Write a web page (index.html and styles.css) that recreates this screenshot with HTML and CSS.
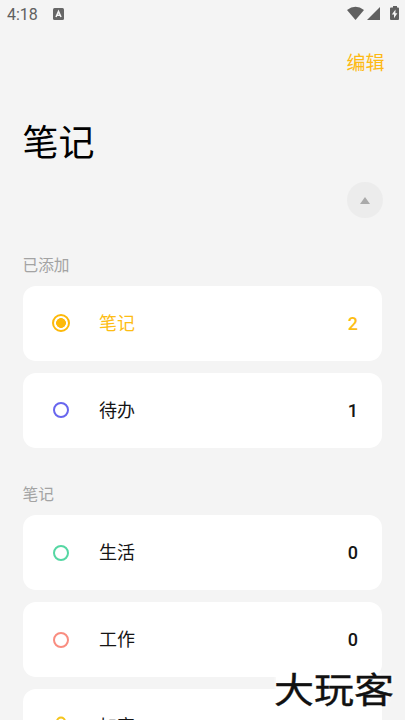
FILE: index.html
```html
<!DOCTYPE html>
<html lang="zh-CN">
<head>
<meta charset="utf-8">
<title>笔记</title>
<link rel="stylesheet" href="styles.css">
</head>
<body>
<header class="status">
  <span class="time">4:18</span>
  <svg class="badge" width="11" height="12" viewBox="0 0 11 12"><rect width="11" height="12" rx="1.5" fill="#666"/><path d="M3 9 5.500 3.500 8 9M4 7.300h3" fill="none" stroke="#f4f4f4" stroke-width="1.600"/></svg>
  <svg class="system" width="52" height="16" viewBox="0 0 52 16" fill="#606060"><path d="M0 4Q8.500-2.500 17 4L8.500 14Z"/><path d="M33 1V14H20Z"/><path d="M44 1.600h2V0h4v1.600h1q1 0 1 1V13q0 1-1 1h-7q-1 0-1-1V2.600q0-1 1-1z"/><path d="M48.500 3.500 44.800 8.500h2.200v3.700l3.400-5h-2z" fill="#f4f4f4"/></svg>
</header>
<nav class="toolbar"><span>编辑</span></nav>
<h1>笔记</h1>
<div class="collapse"><button aria-label="收起"><svg width="10" height="7" viewBox="0 0 10 7"><path d="M5 0 10 7H0Z" fill="#aaa"/></svg></button></div>
<main>
  <section>
    <h2>已添加</h2>
    <ul>
      <li class="active"><i class="dot selected"></i><span>笔记</span><b>2</b></li>
      <li><i class="dot blue"></i><span>待办</span><b>1</b></li>
    </ul>
  </section>
  <section>
    <h2>笔记</h2>
    <ul>
      <li><i class="dot green"></i><span>生活</span><b>0</b></li>
      <li><i class="dot coral"></i><span>工作</span><b>0</b></li>
      <li><svg class="lock" width="16" height="20" viewBox="0 0 16 20"><path d="M4 9V5.500a4 4 0 0 1 8 0V9" fill="none" stroke="#f5c51d" stroke-width="2"/><rect x="1" y="8" width="14" height="11" rx="2" fill="#f5c51d"/></svg><span>加密</span></li>
    </ul>
  </section>
</main>
<div class="watermark"><span>大玩客</span></div>
</body>
</html>
```
FILE: styles.css
```css
* { box-sizing: border-box; }
html { overflow: hidden; }
body {
  position: relative;
  margin: 0;
  height: 720px;
  overflow: hidden;
  background: #f4f4f4;
  color: #151515;
  font-family: Roboto, "Noto Sans CJK SC", sans-serif;
}
.status {
  display: flex;
  align-items: center;
  height: 28px;
  padding: 0 7px;
  color: #606060;
}
.time { width: 46px; font-size: 16px; }
.system { margin-left: auto; margin-right: -1px; }
.toolbar {
  display: flex;
  justify-content: flex-end;
  align-items: center;
  height: 66px;
  padding-right: 20.5px;
  color: #fdb913;
  font-size: 19px;
}
h1 {
  margin: 23px 0 0 22.5px;
  font-size: 36px;
  line-height: 54px;
  font-weight: 400;
  color: #000;
}
.collapse {
  display: flex;
  justify-content: flex-end;
  padding: 11px 22.5px 0 0;
}
.collapse button {
  display: grid;
  place-items: center;
  width: 36px;
  height: 36px;
  padding: 0;
  border: 0;
  border-radius: 50%;
  background: #ececec;
}
main { padding: 35px 23px 0 22.5px; }
section { margin-bottom: 34px; }
h2 {
  margin: 0 0 8px;
  font-size: 15.7px;
  line-height: 25px;
  font-weight: 400;
  color: #a3a3a3;
}
ul {
  display: grid;
  gap: 12px;
  margin: 0;
  padding: 0;
  list-style: none;
}
li {
  display: flex;
  align-items: center;
  height: 75px;
  padding: 0 24px 1px 30px;
  border-radius: 13px;
  background: #fff;
  font-size: 18px;
}
li span { margin-left: 30.5px; padding-bottom: 2px; }
li b { margin-left: auto; font-weight: 500; font-size: 18px; }
.active { color: #fdbd14; }
.dot {
  width: 16px;
  height: 16px;
  border: 2px solid;
  border-radius: 50%;
}
.selected {
  width: 18px;
  height: 18px;
  margin: 0 -1px;
  background: radial-gradient(circle, #fdb90a 4.6px, #fff 5.2px);
  border-color: #fdb90a;
}
.blue { border-color: #6866ee; }
.green { border-color: #55d7a3; }
.coral { border-color: #f98d80; }
.green, .coral { margin-top: 1px; }
.lock { flex: none; }
.watermark {
  position: absolute;
  left: 274px;
  top: 666px;
  color: #111;
  font: 400 40px/44px "Noto Sans CJK SC", sans-serif;
  -webkit-text-stroke: .4px #111;
  text-shadow: 0 0 3px #fff, 0 0 5px #fff, 0 0 8px #fff;
}
.watermark::before {
  content: "";
  position: absolute;
  inset: 8px 13px 18px 2px;
  background: #fff;
  box-shadow: 0 0 3px #fff;
}
.watermark span {
  position: relative;
  display: block;
  transform: scaleY(.88);
}
```
